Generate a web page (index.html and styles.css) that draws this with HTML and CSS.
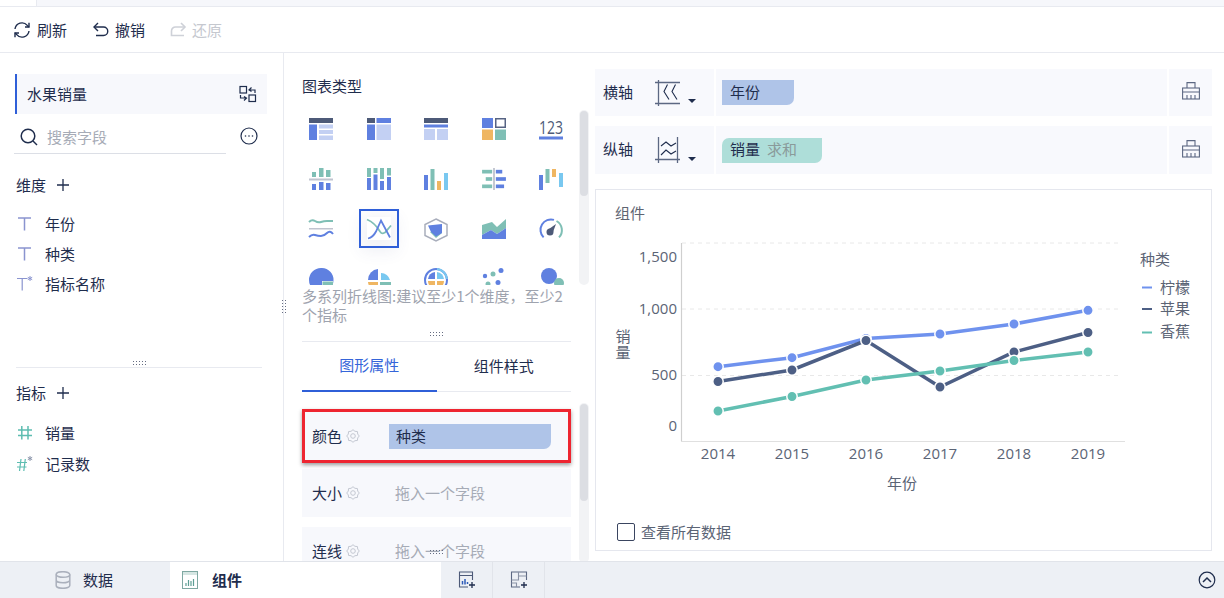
FILE: index.html
```html
<!DOCTYPE html>
<html lang="zh-CN">
<head>
<meta charset="utf-8">
<title>组件</title>
<link rel="stylesheet" href="styles.css">
</head>
<body>
<div class="top-strip"><span class="strip-cell"></span></div>
<header class="toolbar">
  <div class="tool">
    <svg class="ico18" viewBox="0 0 18 18" fill="none" stroke="#1f2d4d" stroke-width="1.4"><path d="M2 8a7 7 0 0 1 12.3-3.6L16 6"/><path d="M16 1.8V6h-4"/><path d="M16 10a7 7 0 0 1-12.3 3.6L2 12"/><path d="M2 16.2V12h4"/></svg>
    <span>刷新</span>
  </div>
  <div class="tool tool-undo">
    <svg class="ico18" viewBox="0 0 18 18" fill="none" stroke="#1f2d4d" stroke-width="1.4"><path d="M6 2 2 6l4 4"/><path d="M2 6h9.5a4 4 0 0 1 0 8.5H4"/></svg>
    <span>撤销</span>
  </div>
  <div class="tool tool-off">
    <svg class="ico18" viewBox="0 0 18 18" fill="none" stroke="#ced1d8" stroke-width="1.6"><path d="M12 2l4 4-4 4"/><path d="M16 6H6.500a4 4 0 0 0-4 4v4.500H15"/></svg>
    <span>还原</span>
  </div>
</header>

<main class="workspace">
  <aside class="data-panel">
    <div class="dataset">
      <span>水果销量</span>
      <svg class="ico18" viewBox="0 0 18 18" fill="none" stroke="#1f2d4d" stroke-width="1.2"><rect x="1" y="1.500" width="6.500" height="6.500"/><rect x="10" y="10" width="6.500" height="6.500"/><path d="M10 5h6V8M12.500 2.500 10 5l2.500 1.500"/><path d="M7.500 13H1.500V10M5 15.500 7.500 13 5 11.500"/></svg>
    </div>
    <div class="search-row">
      <div class="search">
        <svg class="ico18" viewBox="0 0 18 18" fill="none" stroke="#1f2d4d" stroke-width="1.500"><circle cx="8" cy="8" r="6.800"/><path d="m13 13 4 4"/></svg>
        <span>搜索字段</span>
      </div>
      <svg class="ico18 more" viewBox="0 0 18 18"><circle cx="9" cy="9" r="8" fill="none" stroke="#1f2d4d" stroke-width="1.200"/><circle cx="5.500" cy="9" r=".8" fill="#1f2d4d"/><circle cx="9" cy="9" r=".8" fill="#1f2d4d"/><circle cx="12.500" cy="9" r=".8" fill="#1f2d4d"/></svg>
    </div>
    <div class="sec-head sec-dim"><span>维度</span><svg class="plus" viewBox="0 0 12 12" stroke="#1f2d4d" stroke-width="1.300"><path d="M6 0v12M0 6h12"/></svg></div>
    <ul class="fields">
      <li><svg class="fico" viewBox="0 0 16 16" fill="none" stroke="#8a94cf" stroke-width="1.500"><path d="M1 2h13M7.500 2v12.500"/></svg>年份</li>
      <li><svg class="fico" viewBox="0 0 16 16" fill="none" stroke="#8a94cf" stroke-width="1.500"><path d="M1 2h13M7.500 2v12.500"/></svg>种类</li>
      <li><svg class="fico" viewBox="0 0 16 16" fill="none" stroke="#8a94cf" stroke-width="1.200"><path d="M0 2.500h10.500M5.200 2.500v12"/><path d="M13 0v5M10.800 1.300l4.400 2.400M15.200 1.300l-4.400 2.400" stroke-width="1"/></svg>指标名称</li>
    </ul>
    <div class="split-h"><span class="grip grip-h"></span></div>
    <div class="sec-head sec-mea"><span>指标</span><svg class="plus" viewBox="0 0 12 12" stroke="#1f2d4d" stroke-width="1.300"><path d="M6 0v12M0 6h12"/></svg></div>
    <ul class="fields fields-mea">
      <li><svg class="fico" viewBox="0 0 16 16" fill="none" stroke="#5dbdb1" stroke-width="1.500"><path d="M1 5h14M1 10.500h14M4.800 1v13.500M11 1v13.500"/></svg>销量</li>
      <li><svg class="fico" viewBox="0 0 16 16" fill="none" stroke="#5dbdb1" stroke-width="1.200"><path d="M0 6.500h10M0 11h9.500M4 3 2.500 15M8.300 3 6.800 15"/><path d="M13 0v5M10.800 1.300l4.400 2.400M15.200 1.300l-4.400 2.400" stroke="#8a94aa" stroke-width="1"/></svg>记录数</li>
    </ul>
    <span class="grip grip-v"></span>
  </aside>

  <section class="config-panel">
    <h2 class="cfg-title">图表类型</h2>
    <div class="gallery">
      <div class="chart-grid">
        <svg class="cht" viewBox="0 0 24 22"><rect width="24" height="5" fill="#4d5a78"/><rect y="6.500" width="8" height="15.500" fill="#5f80e0"/><rect x="10" y="6.500" width="14" height="4" fill="#c3d0f3"/><rect x="10" y="12" width="14" height="4" fill="#c3d0f3"/><rect x="10" y="17.500" width="14" height="4.500" fill="#c3d0f3"/></svg>
        <svg class="cht" viewBox="0 0 24 22"><rect width="8" height="5" fill="#4d5a78"/><rect x="9.500" width="14.500" height="5" fill="#5f80e0"/><rect y="6.500" width="8" height="15.500" fill="#5f80e0"/><rect x="9.500" y="6.500" width="14.500" height="15.500" fill="#c3d0f3"/></svg>
        <svg class="cht" viewBox="0 0 24 22"><rect width="24" height="5" fill="#4d5a78"/><rect y="6.500" width="24" height="3" fill="#5f80e0"/><rect y="11" width="11" height="11" fill="#c3d0f3"/><rect x="13" y="11" width="11" height="11" fill="#c3d0f3"/></svg>
        <svg class="cht" viewBox="0 0 24 22"><rect width="11" height="10" fill="#5f80e0"/><rect x="13.750" y=".75" width="9.500" height="8.500" fill="#fff" stroke="#566383" stroke-width="1.500"/><rect y="11.500" width="11" height="10.500" fill="#efb662"/><rect x="13" y="11.500" width="11" height="10.500" fill="#7fbfb5"/></svg>
        <svg class="cht" viewBox="0 0 24 22"><text class="num-ico" x="0" y="16" textLength="24" lengthAdjust="spacingAndGlyphs">123</text><rect y="18.500" width="24" height="3" fill="#5f80e0"/></svg>

        <svg class="cht" viewBox="0 0 24 22"><rect x="3" y="4" width="4" height="5" fill="#7fbfb5"/><rect x="10" y="0" width="4.500" height="9" fill="#7fbfb5"/><rect x="17" y="2" width="4.500" height="7" fill="#7fbfb5"/><rect y="10.500" width="24" height="2" fill="#c0c4cf"/><rect x="3" y="16" width="4" height="6" fill="#5f80e0"/><rect x="10" y="14" width="4.500" height="8" fill="#5f80e0"/><rect x="17" y="15" width="4.500" height="7" fill="#5f80e0"/></svg>
        <svg class="cht" viewBox="0 0 24 22"><rect width="4" height="9" fill="#7fbfb5"/><rect y="10" width="4" height="12" fill="#5f80e0"/><rect x="6.500" width="4" height="5" fill="#7fbfb5"/><rect x="6.500" y="6.500" width="4" height="15.500" fill="#5f80e0"/><rect x="13" width="4" height="11" fill="#7fbfb5"/><rect x="13" y="13" width="4" height="9" fill="#5f80e0"/><rect x="20" width="4" height="7.500" fill="#7fbfb5"/><rect x="20" y="9" width="4" height="13" fill="#5f80e0"/></svg>
        <svg class="cht" viewBox="0 0 24 22"><rect y="7" width="4" height="15" fill="#5f80e0"/><rect x="6.500" y="1" width="4" height="21" fill="#7fbfb5"/><rect x="13" y="13" width="4" height="9" fill="#efb662"/><rect x="20" y="5" width="4" height="17" fill="#79c8f0"/></svg>
        <svg class="cht" viewBox="0 0 26 24"><rect y="2" width="11" height="4" fill="#7fbfb5"/><rect x="4" y="10" width="7" height="4" fill="#7fbfb5"/><rect y="18" width="11" height="4" fill="#7fbfb5"/><rect x="12" width="2" height="24" fill="#c0c4cf"/><rect x="15" y="2" width="7" height="4" fill="#5f80e0"/><rect x="15" y="10" width="11" height="4" fill="#5f80e0"/><rect x="15" y="18" width="9" height="4" fill="#5f80e0"/></svg>
        <svg class="cht" viewBox="0 0 24 22"><rect y="7" width="4" height="15" fill="#5f80e0"/><rect x="6.500" y="1" width="4" height="14" fill="#7fbfb5"/><rect x="13" y="1" width="4" height="8" fill="#efb662"/><rect x="20" y="5" width="4" height="14" fill="#79c8f0"/></svg>

        <svg class="cht" viewBox="0 0 24 22" fill="none" stroke-width="2"><path d="M0 4q3-3 6-1t6 1 6-1 6 0" stroke="#7fbfb5"/><rect y="10" width="24" height="1.500" fill="#c0c4cf" stroke="none"/><path d="M0 19q3-3 6-2t6 1 6-3 6 1" stroke="#5f80e0"/></svg>
        <svg class="cht cht-on" viewBox="0 0 24 22" fill="none" stroke-width="1.800"><path d="M0 2c5 2 10 7 13 12 2 3 3 2 5 1l6-7" stroke="#7fbfb5"/><path d="M1 21c4-1 6-3 8-7l5-11 9 17" stroke="#5f80e0"/></svg>
        <svg class="cht cht-tall" viewBox="0 0 24 24" fill="none"><path d="M12 1 23 6.500v11L12 23 1 17.500v-11z" stroke="#a9aebc" stroke-width="1.500"/><path d="M6 14 12 20l6-5v-4z" fill="#7fbfb5"/><path d="M4 7.500 18 6v9l-6 3.500L7 14z" fill="#5f80e0"/></svg>
        <svg class="cht" viewBox="0 0 24 22"><path d="M0 7l10-3 5 5 9-8v9l-9 6-6-4-9 5z" fill="#7fbfb5"/><path d="M0 17l9-5 6 4 9-6v11H0z" fill="#5f80e0"/></svg>
        <svg class="cht cht-tall" viewBox="0 0 24 24" fill="none"><path d="M4.600 19.400A10.500 10.500 0 0 1 15 1.900" stroke="#5f80e0" stroke-width="2"/><path d="M17.500 3A10.500 10.500 0 0 1 20 19.400" stroke="#7fbfb5" stroke-width="2"/><circle cx="11" cy="14" r="3.500" fill="#4d5a78"/><path d="m10 11 7-5-3 8z" fill="#4d5a78"/></svg>

        <svg class="cht cht-tall" viewBox="0 0 24 24"><path d="M12 0a12 12 0 1 0 0 24 12 12 0 0 0 1-24z" fill="#5f80e0"/><path d="M13 13h11v11H13z" fill="#fff"/><rect x="13.500" y="13.500" width="10.500" height="10.500" fill="#7fbfb5"/></svg>
        <svg class="cht cht-tall" viewBox="0 0 24 24"><path d="M11 1v11H1A11 11 0 0 1 11 1z" fill="#5f80e0"/><path d="M14 5a9 9 0 0 1 9 7h-9z" fill="#79c8f0"/><path d="M1 14h10v10A11 11 0 0 1 1 14z" fill="#efb662"/><path d="M13 14h11v10H13z" fill="#7fbfb5"/></svg>
        <svg class="cht cht-tall" viewBox="0 0 24 24" fill="none"><circle cx="12" cy="12" r="11" stroke="#5f80e0" stroke-width="2"/><path d="M13 1a11 11 0 0 1 10 10" stroke="#79c8f0" stroke-width="2"/><path d="M11 4v7H4a7.500 7.500 0 0 1 7-7z" fill="#5f80e0"/><path d="M13 4a7.500 7.500 0 0 1 7 7h-7z" fill="#79c8f0"/><path d="M4 13h7v8a8 8 0 0 1-7-8zM13 13h7a8 8 0 0 1-7 8z" fill="#efb662"/></svg>
        <svg class="cht cht-tall" viewBox="0 0 24 24"><circle cx="3" cy="8" r="2.200" fill="#5f80e0"/><circle cx="11" cy="6" r="2.500" fill="#7fbfb5"/><circle cx="19" cy="2.500" r="2.500" fill="#5f80e0"/><circle cx="6" cy="16" r="2.500" fill="#7fbfb5"/><circle cx="16" cy="14.500" r="2.500" fill="#5f80e0"/></svg>
        <svg class="cht cht-tall" viewBox="0 0 24 24"><circle cx="10" cy="8" r="8" fill="#5f80e0"/><circle cx="20" cy="15" r="5" fill="#7fbfb5"/><circle cx="11" cy="19" r="2" fill="#efb662"/></svg>
      </div>
      <div class="scroll scroll-top"><span class="thumb thumb-top"></span></div>
    </div>
    <p class="tip">多系列折线图:建议至少1个维度，至少2<br>个指标</p>
    <div class="split-mid"><span class="grip grip-h"></span></div>
    <nav class="tabs">
      <span class="tab tab-on">图形属性</span>
      <span class="tab">组件样式</span>
    </nav>
    <div class="props">
      <div class="prop-list">
        <div class="prop prop-mark">
          <span class="prop-name">颜色</span>
          <svg class="gear" viewBox="0 0 14 14" fill="none" stroke="#c4c8d2"><path d="M13.300 7L11.700 8.950 11.450 11.450 8.950 11.700 7 13.300 5.050 11.700 2.550 11.450 2.300 8.950 .7 7 2.300 5.050 2.550 2.550 5.050 2.300 7 .7 8.950 2.300 11.450 2.550 11.700 5.050Z"/><circle cx="7" cy="7" r="2.300"/></svg>
          <span class="pill pill-prop">种类</span>
        </div>
        <div class="prop">
          <span class="prop-name">大小</span>
          <svg class="gear" viewBox="0 0 14 14" fill="none" stroke="#c4c8d2"><path d="M13.300 7L11.700 8.950 11.450 11.450 8.950 11.700 7 13.300 5.050 11.700 2.550 11.450 2.300 8.950 .7 7 2.300 5.050 2.550 2.550 5.050 2.300 7 .7 8.950 2.300 11.450 2.550 11.700 5.050Z"/><circle cx="7" cy="7" r="2.300"/></svg>
          <span class="hint">拖入一个字段</span>
        </div>
        <div class="prop prop-last">
          <span class="prop-name">连线</span>
          <svg class="gear" viewBox="0 0 14 14" fill="none" stroke="#c4c8d2"><path d="M13.300 7L11.700 8.950 11.450 11.450 8.950 11.700 7 13.300 5.050 11.700 2.550 11.450 2.300 8.950 .7 7 2.300 5.050 2.550 2.550 5.050 2.300 7 .7 8.950 2.300 11.450 2.550 11.700 5.050Z"/><circle cx="7" cy="7" r="2.300"/></svg>
          <span class="hint">拖入一个字段</span>
          <span class="grip grip-h grip-over"></span>
        </div>
      </div>
      <div class="scroll scroll-props"><span class="thumb thumb-props"></span></div>
    </div>
  </section>

  <section class="view-panel">
    <div class="axis-row">
      <div class="axis-head">
        <span class="axis-label">横轴</span>
        <svg class="axis-ico" viewBox="0 0 26 26" fill="none" stroke="#5c6883" stroke-width="1.300"><path d="M0 2.500h25M0 23.500h25M3.500 0v26"/><path d="M12.500 4.500 9 11.500l5 8M20.500 4.500 17 11.500l5 8" stroke="#1f2d4d" stroke-width="1.100"/></svg>
        <span class="caret"></span>
      </div>
      <div class="axis-drop"><span class="pill pill-x">年份</span></div>
      <div class="axis-end">
        <svg class="brush" viewBox="0 0 18 18" fill="none" stroke="#5c6883" stroke-width="1.100"><path d="M5 6V.6h8V6"/><rect x=".6" y="6" width="16.800" height="11"/><path d="M.6 10h16.800M5 13v4M9 13v4M13 13v4"/></svg>
      </div>
    </div>
    <div class="axis-row axis-row-y">
      <div class="axis-head">
        <span class="axis-label">纵轴</span>
        <svg class="axis-ico" viewBox="0 0 26 26" fill="none" stroke="#5c6883" stroke-width="1.300"><path d="M3.500 0v26M22.500 0v26M0 22.500h25"/><path d="m6 9 5-4 5 4 5-3M6 18l5-5 5 4 5-3" stroke="#1f2d4d" stroke-width="1.100"/></svg>
        <span class="caret"></span>
      </div>
      <div class="axis-drop"><span class="pill pill-y">销量<em>求和</em></span></div>
      <div class="axis-end">
        <svg class="brush" viewBox="0 0 18 18" fill="none" stroke="#5c6883" stroke-width="1.100"><path d="M5 6V.6h8V6"/><rect x=".6" y="6" width="16.800" height="11"/><path d="M.6 10h16.800M5 13v4M9 13v4M13 13v4"/></svg>
      </div>
    </div>

    <div class="card">
      <div class="card-title">组件</div>
      <svg class="plot" viewBox="596 230 615 290">
        <g class="grid-lines">
          <path d="M682 243h440M682 309h440M682 375.500h440"/>
        </g>
        <path class="axis-v" d="M681.500 243v198"/>
        <path class="axis-b" d="M681 441.500h444"/>
        <g class="tick">
          <text x="677" y="262" text-anchor="end">1,500</text>
          <text x="677" y="314" text-anchor="end">1,000</text>
          <text x="677" y="380" text-anchor="end">500</text>
          <text x="677" y="431" text-anchor="end">0</text>
          <text x="718" y="459" text-anchor="middle">2014</text>
          <text x="792" y="459" text-anchor="middle">2015</text>
          <text x="866" y="459" text-anchor="middle">2016</text>
          <text x="940" y="459" text-anchor="middle">2017</text>
          <text x="1014" y="459" text-anchor="middle">2018</text>
          <text x="1088" y="459" text-anchor="middle">2019</text>
        </g>
        <g class="label">
          <text text-anchor="middle"><tspan x="623" y="342">销</tspan><tspan x="623" y="358">量</tspan></text>
          <text x="902" y="489" text-anchor="middle">年份</text>
          <text x="1140" y="265">种类</text>
          <text x="1160" y="293">柠檬</text>
          <text x="1160" y="314">苹果</text>
          <text x="1160" y="337">香蕉</text>
        </g>
        <g class="swatches">
          <path d="M1142 287.500h10" stroke="#6f92ee"/>
          <path d="M1142 309h10" stroke="#4d5f85"/>
          <path d="M1142 332.500h10" stroke="#62bfb2"/>
        </g>
        <g class="series s-blue">
          <polyline points="718,366.700 792,357.700 866,338.500 940,334 1014,324 1088,310.300"/>
          <circle cx="718" cy="366.700" r="5.200"/><circle cx="792" cy="357.700" r="5.200"/><circle cx="866" cy="338.500" r="5.200"/><circle cx="940" cy="334" r="5.200"/><circle cx="1014" cy="324" r="5.200"/><circle cx="1088" cy="310.300" r="5.200"/>
        </g>
        <g class="series s-dark">
          <polyline points="718,381.500 792,370 866,340.500 940,387 1014,352 1088,332.500"/>
          <circle cx="718" cy="381.500" r="5.200"/><circle cx="792" cy="370" r="5.200"/><circle cx="866" cy="340.500" r="5.200"/><circle cx="940" cy="387" r="5.200"/><circle cx="1014" cy="352" r="5.200"/><circle cx="1088" cy="332.500" r="5.200"/>
        </g>
        <g class="series s-teal">
          <polyline points="718,411 792,396.500 866,380 940,371 1014,360.500 1088,352"/>
          <circle cx="718" cy="411" r="5.200"/><circle cx="792" cy="396.500" r="5.200"/><circle cx="866" cy="380" r="5.200"/><circle cx="940" cy="371" r="5.200"/><circle cx="1014" cy="360.500" r="5.200"/><circle cx="1088" cy="352" r="5.200"/>
        </g>
      </svg>
      <label class="see-all"><span class="check"></span><span>查看所有数据</span></label>
    </div>
  </section>
</main>

<footer class="dock">
  <div class="dock-tab">
    <svg class="db" viewBox="0 0 16 18" fill="none" stroke="#aab0bc" stroke-width="1.500"><ellipse cx="8" cy="3.500" rx="6.800" ry="2.800"/><path d="M1.200 3.500v11c0 1.500 3 2.800 6.800 2.800s6.800-1.300 6.800-2.800v-11M1.200 9c0 1.500 3 2.800 6.800 2.800s6.800-1.300 6.800-2.800"/></svg>
    <span>数据</span>
  </div>
  <div class="dock-tab dock-on">
    <svg class="dock-chart" viewBox="0 0 16 18" fill="none"><rect x=".5" y=".5" width="15" height="17" stroke="#7fa8a2"/><rect x="1" y="1" width="14" height="3" fill="#d6e6e3"/><path d="M4 15v-3M6.500 15V9M9 15v-5M11.500 15V8" stroke="#5d9e94" stroke-width="1.200"/></svg>
    <span>组件</span>
  </div>
  <div class="dock-cell">
    <svg class="ico18" viewBox="0 0 18 18" fill="none" stroke="#4d5a78" stroke-width="1.100"><path d="M10 16H1.500V1h13v8M1.500 4.500h13"/><path d="M4.500 13.500V10M7 13.500V8M9.500 13V11" stroke="#2d5bb8" stroke-width="1.500"/><path d="M14 11v6M11 14h6" stroke="#1f2d4d" stroke-width="1.300"/></svg>
  </div>
  <div class="dock-cell">
    <svg class="ico18" viewBox="0 0 18 18" fill="none" stroke="#5c6883" stroke-width="1.100"><path d="M10 16H1.500V1h15v8"/><path d="M1.500 9h7V1M8.500 5h8M1.500 12h5v4" stroke="#8a92a5"/><path d="M14 11v6M11 14h6" stroke="#1f2d4d" stroke-width="1.300"/></svg>
  </div>
  <svg class="ico18 dock-up" viewBox="0 0 18 18" fill="none" stroke="#1f2d4d" stroke-width="1.200"><circle cx="9" cy="9" r="7.800"/><path d="m5 11 4-4 4 4" stroke-width="1.500"/></svg>
</footer>
</body>
</html>
```

FILE: styles.css
```css
* { box-sizing: border-box; }
html, body { margin: 0; height: 100%; overflow: hidden; }
body {
  display: flex;
  flex-direction: column;
  width: 1224px;
  height: 598px;
  background: #fff;
  color: #1f2d4d;
  font: 15px/20px "Noto Sans CJK SC", "Liberation Sans", sans-serif;
}
h2, p, ul { margin: 0; padding: 0; }
ul { list-style: none; }
em { font-style: normal; }
svg { display: block; flex: none; }
.ico18 { width: 18px; height: 18px; }

/* top */
.top-strip {
  height: 7px;
  flex: none;
  background: #f6f7fb;
  border-bottom: 1px solid #e8eaf0;
}
.strip-cell {
  display: block;
  width: 37px;
  height: 6px;
  background: #fff;
  border-right: 1px solid #e8eaf0;
}
.toolbar {
  flex: none;
  height: 46px;
  display: flex;
  align-items: center;
  padding-left: 13px;
  border-bottom: 1px solid #e8eaf0;
}
.tool { display: flex; align-items: center; gap: 6px; margin-right: 25px; }
.tool-undo { gap: 5px; margin-right: 24px; }
.tool-off { gap: 5px; color: #c5c8cf; }

.workspace { flex: 1; min-height: 0; display: flex; }

/* left */
.data-panel {
  position: relative;
  flex: none;
  width: 284px;
  padding: 21px 0 0 15px;
  border-right: 1px solid #e8eaf0;
}
.dataset {
  width: 252px;
  height: 40px;
  display: flex;
  align-items: center;
  justify-content: space-between;
  padding: 0 10px;
  background: #f7f8fc;
  border-left: 2px solid #2f5fd8;
}
.search-row { display: flex; align-items: center; gap: 14px; height: 40px; }
.search {
  width: 212px;
  height: 40px;
  margin-left: -1px;
  display: flex;
  align-items: center;
  gap: 9px;
  padding: 6px 0 0 6px;
  color: #a6abb6;
  border-bottom: 1px solid #dcdfe6;
}
.more { margin-top: 4px; }
.sec-head { display: flex; align-items: center; gap: 11px; height: 20px; padding-left: 1px; }
.sec-dim { margin-top: 21px; }
.plus { width: 12px; height: 12px; }
.fields { margin-top: 14px; }
.fields li { display: flex; align-items: center; gap: 12px; height: 30px; padding-left: 2px; }
.fico { width: 16px; height: 16px; }
.fields-mea { margin-top: 15px; }
.fields-mea li:last-child { margin-top: 1px; }
.split-h {
  position: relative;
  width: 246px;
  height: 1px;
  margin: 68px 0 0 1px;
  background: #e8eaf0;
}
.sec-mea { margin-top: 15px; }
.grip {
  display: block;
  background-image: radial-gradient(circle, #666d82 .8px, transparent 1px);
  background-size: 3px 3px;
}
.grip-h { width: 15px; height: 6px; }
.grip-v { position: absolute; right: -4px; top: 246px; width: 6px; height: 15px; }
.split-h .grip-h { position: absolute; left: 116px; top: -7px; }

/* middle */
.config-panel {
  flex: none;
  width: 311px;
  padding: 23px 6px 0 18px;
  overflow: hidden;
}
.cfg-title { font-size: 15px; font-weight: 400; height: 20px; line-height: 20px; }
.gallery { display: flex; height: 175px; margin-top: 14px; overflow: hidden; }
.chart-grid {
  width: 277px;
  flex: none;
  display: grid;
  grid-template-columns: repeat(5, 24px);
  grid-auto-rows: 22px;
  column-gap: 33.5px;
  row-gap: 28px;
  padding: 8px 0 0 7px;
}
.cht { width: 24px; height: 22px; overflow: visible; }
.cht-tall { height: 24px; }
.cht-on {
  height: 23px;
  margin-top: -1px;
  outline: 2px solid #2f5fd8;
  outline-offset: 6px;
  box-shadow: 0 6px 16px 6px rgba(60, 80, 140, .08);
}
.num-ico { font: 400 19px "Open Sans", sans-serif; fill: #4d5a78; }
.scroll { flex: none; width: 10px; background: #f2f3f5; border-radius: 5px; padding: 1px; }
.thumb { display: block; width: 8px; background: #dcdee3; border-radius: 4px; }
.thumb-top { height: 85px; }
.thumb-props { height: 97px; }
.tip { width: 269px; margin-top: 1px; color: #9ea3ae; line-height: 19px; white-space: nowrap; }
.split-mid { position: relative; width: 269px; height: 1px; margin-top: 17px; background: #e8eaf0; }
.split-mid .grip-h { position: absolute; left: 127px; top: -10px; }
.tabs { display: flex; width: 269px; height: 50px; border-bottom: 1px solid #e8eaf0; }
.tab { flex: 1; display: flex; align-items: center; justify-content: center; padding-bottom: 2px; }
.tab-on { color: #3565d9; border-bottom: 2px solid #2f5fd8; margin-bottom: -1px; }
.props { display: flex; gap: 8px; margin-top: 11px; }
.prop-list { width: 269px; padding-top: 6px; }
.prop {
  position: relative;
  display: flex;
  align-items: center;
  height: 48px;
  padding-left: 10px;
  margin-bottom: 10px;
  background: #f7f8fc;
}
.prop-mark {
  height: 54px;
  margin-bottom: 6px;
  padding-left: 7px;
  border: 3px solid #ee2530;
  box-shadow: 0 2px 4px rgba(0, 0, 0, .4);
}
.prop-name { width: 34px; }
.gear { width: 14px; height: 14px; margin-right: 29px; }
.pill {
  display: inline-flex;
  align-items: center;
  height: 25px;
  padding-left: 7px;
  border-radius: 0 0 7px 0;
}
.pill-prop { width: 162px; background: #afc4e8; }
.hint { margin-left: 6px; color: #a6abb6; }
.grip-over { position: absolute; left: 127px; top: 22px; }
.scroll-props { height: 160px; }

/* right */
.view-panel { flex: none; width: 617px; padding-top: 16px; }
.axis-row { display: flex; gap: 2px; height: 47px; }
.axis-row-y { height: 48px; margin-top: 10px; }
.axis-head, .axis-drop, .axis-end { background: #f8f9fd; display: flex; align-items: center; }
.axis-head { width: 119px; padding-left: 8px; }
.axis-label { width: 52px; padding-bottom: 2px; }
.axis-ico { width: 26px; height: 26px; }
.caret {
  width: 0; height: 0;
  margin: 17px 0 0 7px;
  border: 4px solid transparent;
  border-top: 4px solid #1f2d4d;
  border-bottom: 0;
}
.axis-drop { width: 451px; padding-left: 6px; }
.axis-end { flex: 1; padding-left: 13px; }
.brush { width: 18px; height: 18px; margin-top: -3px; }
.pill-x { width: 72px; padding: 0 0 2px 8px; background: #afc4e8; }
.pill-y { width: 100px; padding: 0 0 2px 8px; background: #aeded9; border-radius: 7px 0 7px 0; }
.pill-y em { margin-left: 7px; color: #8a9a9a; }

.card {
  width: 617px;
  height: 362px;
  margin-top: 15px;
  border: 1px solid #e5e7ee;
  padding-top: 13px;
}
.card-title { height: 20px; padding-left: 19px; color: #5e6472; margin-bottom: 7px; }
.plot { width: 615px; height: 290px; }
.grid-lines path { stroke: #e8e8e8; stroke-dasharray: 4 4; fill: none; }
.axis-v { stroke: #cfcfcf; stroke-width: 1.200; fill: none; }
.axis-b { stroke: #e0e0e0; fill: none; }
.tick text { font: 15px "Open Sans", sans-serif; fill: #5b6475; }
.label text { font: 15px "Noto Sans CJK SC", sans-serif; fill: #5b6475; }
.swatches path { stroke-width: 2; fill: none; }
.series polyline { fill: none; stroke-width: 3.500; }
.series circle { stroke: #fff; stroke-width: 1.500; }
.s-blue polyline { stroke: #6f92ee; }
.s-blue circle { fill: #6f92ee; }
.s-dark polyline { stroke: #4d5f85; }
.s-dark circle { fill: #4d5f85; }
.s-teal polyline { stroke: #62bfb2; }
.s-teal circle { fill: #62bfb2; }
.see-all { display: flex; align-items: center; gap: 6px; padding-left: 21px; color: #5b6475; height: 24px; }
.check { width: 18px; height: 18px; border: 1px solid #3a4560; border-radius: 2px; background: #fff; }

/* dock */
.dock {
  flex: none;
  height: 37px;
  display: flex;
  align-items: center;
  background: #edf0f5;
  border-top: 1px solid #e1e4ea;
}
.dock-tab { display: flex; align-items: center; height: 36px; gap: 12px; width: 170px; padding-left: 55px; }
.db { width: 16px; height: 18px; }
.dock-on {
  width: 271px;
  gap: 14px;
  padding-left: 12px;
  background: #fff;
  font-weight: 700;
}
.dock-chart { width: 16px; height: 18px; }
.dock-cell {
  width: 52px;
  height: 36px;
  display: flex;
  align-items: center;
  justify-content: center;
  border-right: 1px solid #e1e4ea;
}
.dock-up { margin-left: auto; margin-right: 8px; }
```
